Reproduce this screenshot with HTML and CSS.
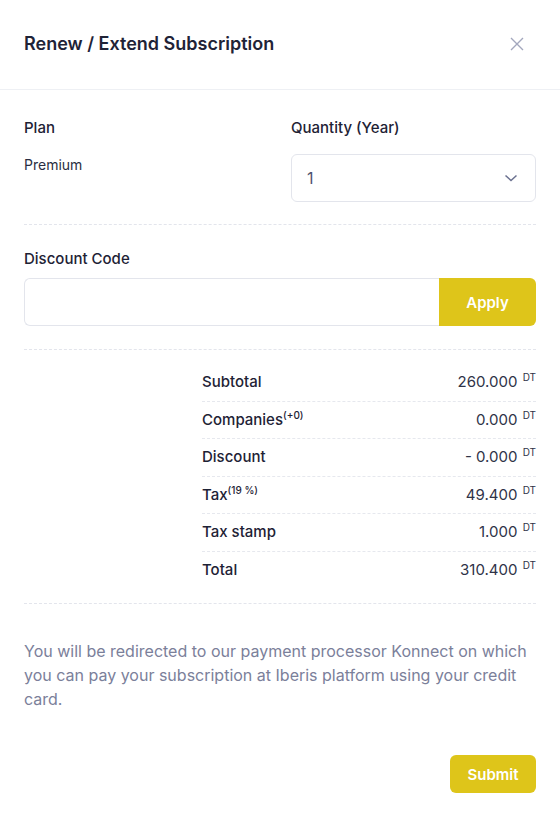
FILE: index.html
```html
<!DOCTYPE html>
<html lang="en">
<head>
  <meta charset="UTF-8" />
  <meta name="viewport" content="width=device-width, initial-scale=1.0" />
  <title>Renew / Extend Subscription</title>
  <link rel="stylesheet" href="styles.css">
</head>
<body>
  <div class="modal">
    <div class="modal-header">
      <h2>Renew / Extend Subscription</h2>
      <button class="close-btn" aria-label="Close">
        <svg width="14" height="14" viewBox="0 0 14 14"><path d="M1 1 L13 13 M13 1 L1 13" stroke="#a3a7bd" stroke-width="1.4" fill="none"/></svg>
      </button>
    </div>

    <div class="section plan-row">
      <div class="col">
        <label>Plan</label>
        <p class="plan-name">Premium</p>
      </div>
      <div class="col">
        <label>Quantity (Year)</label>
        <div class="select">
          <span>1</span>
          <svg width="14" height="8" viewBox="0 0 14 8"><path d="M1.5 1.5 L7 6.5 L12.5 1.5" stroke="#6b7190" stroke-width="1.5" fill="none"/></svg>
        </div>
      </div>
    </div>

    <div class="section discount">
      <label>Discount Code</label>
      <div class="input-group">
        <input type="text">
        <button class="btn">Apply</button>
      </div>
    </div>

    <div class="section summary-wrap">
      <div class="summary">
        <div class="row"><span>Subtotal</span><span>260.000 <sup>DT</sup></span></div>
        <div class="row"><span>Companies<sup>(+0)</sup></span><span>0.000 <sup>DT</sup></span></div>
        <div class="row"><span>Discount</span><span>- 0.000 <sup>DT</sup></span></div>
        <div class="row"><span>Tax<sup>(19 %)</sup></span><span>49.400 <sup>DT</sup></span></div>
        <div class="row"><span>Tax stamp</span><span>1.000 <sup>DT</sup></span></div>
        <div class="row"><span>Total</span><span>310.400 <sup>DT</sup></span></div>
      </div>
    </div>

    <p class="note">You will be redirected to our payment processor Konnect on which you can pay your subscription at Iberis platform using your credit card.</p>

    <div class="footer">
      <button class="btn submit">Submit</button>
    </div>
  </div>
</body>
</html>
```

FILE: styles.css
```css
* {
  box-sizing: border-box;
}
body {
  margin: 0;
  background: #fff;
  font-family: Inter, "Noto Sans", sans-serif;
  color: #1e2235;
}
.modal {
  width: 560px;
  height: 819px;
  background: #fff;
}
.modal-header {
  display: flex;
  justify-content: space-between;
  align-items: center;
  padding: 30px 24px 31px;
  border-bottom: 1px solid #eef0f4;
}
.modal-header h2 {
  margin: 0;
  font-size: 18px;
  line-height: 28px;
  font-weight: 600;
  color: #1f2337;
}
.close-btn {
  background: none;
  border: none;
  padding: 0;
  margin-right: 12px;
  display: flex;
  cursor: pointer;
}
.section {
  margin: 0 24px;
  border-bottom: 1px dashed #e3e5ec;
}
label {
  display: block;
  font-size: 15px;
  line-height: 24px;
  font-weight: 500;
  color: #1e2235;
}
.plan-row {
  display: grid;
  grid-template-columns: 1fr 1fr;
  column-gap: 22px;
  padding: 26px 0 22px;
}
.plan-row label {
  margin-bottom: 14px;
}
.plan-name {
  margin: 0;
  padding-top: 1px;
  font-size: 14px;
  line-height: 20px;
  color: #2a2e42;
}
.select {
  height: 48px;
  border: 1px solid #e3e5ec;
  border-radius: 6px;
  display: flex;
  align-items: center;
  justify-content: space-between;
  padding: 0 17px 0 15px;
  font-size: 16px;
  color: #4d5370;
}
.discount {
  padding: 22px 0 23px;
}
.discount label {
  margin-bottom: 7px;
}
.input-group {
  display: flex;
  height: 48px;
}
.input-group input {
  flex: 1;
  border: 1px solid #e3e5ec;
  border-right: none;
  border-radius: 6px 0 0 6px;
  font-size: 15px;
  padding: 0 14px;
  outline: none;
}
.btn {
  background: #dec51a;
  color: #fff;
  border: none;
  font-family: inherit;
  font-size: 15px;
  font-weight: 600;
  cursor: pointer;
}
.input-group .btn {
  width: 97px;
  border-radius: 0 6px 6px 0;
}
.summary-wrap {
  display: flex;
  justify-content: flex-end;
  padding: 14px 0 15px;
}
.summary {
  width: 334px;
}
.row {
  display: flex;
  justify-content: space-between;
  padding: 8px 0;
  line-height: 20.5px;
  font-size: 15px;
  border-bottom: 1px dashed #e6e8ee;
}
.row:last-child {
  border-bottom: none;
}
.row span:first-child {
  font-weight: 500;
  color: #1e2235;
}
.row span:last-child {
  color: #2f3348;
}
sup {
  font-size: 10px;
  line-height: 0;
  vertical-align: 6px;
}
.row span:last-child sup {
  margin-left: 1px;
}
.note {
  margin: 0;
  padding: 35px 24px 0;
  font-size: 16px;
  line-height: 24px;
  color: #7b809a;
}
.footer {
  display: flex;
  justify-content: flex-end;
  padding: 44px 24px 0;
}
.submit {
  width: 86px;
  height: 38px;
  border-radius: 6px;
}
```
